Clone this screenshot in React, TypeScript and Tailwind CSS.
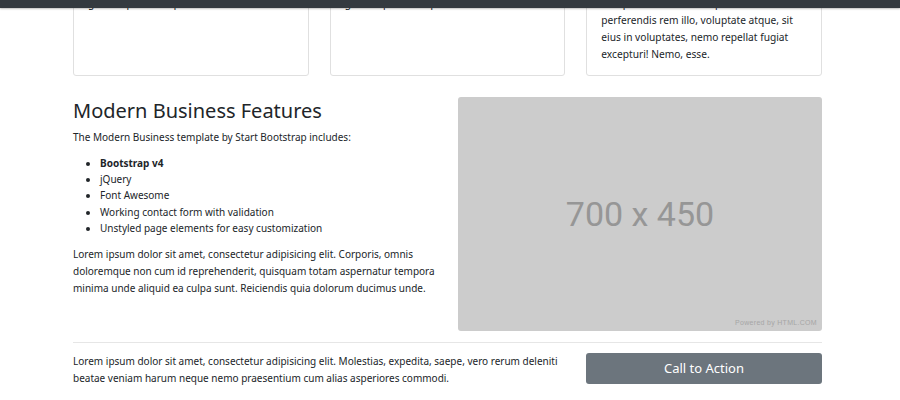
const body = "font-['Noto_Sans','Open_Sans',sans-serif]"

const cards = [
  ['Lorem ipsum dolor sit amet, consectetur', 'adipisicing elit. Sapiente esse neque sed', 'gravida pellentesque urna varius vitae.'],
  ['Lorem ipsum dolor sit amet, consectetur', 'adipisicing elit. Sapiente esse neque sed', 'gravida pellentesque urna varius vitae.'],
  [
    'Lorem ipsum dolor sit amet, consectetur',
    'adipisicing elit. Ipsam, illum! Fugit',
    'excepturi ducimus nihil provident,',
    'perferendis rem illo, voluptate atque, sit',
    'eius in voluptates, nemo repellat fugiat',
    'excepturi! Nemo, esse.',
  ],
]

const features = ['jQuery', 'Font Awesome', 'Working contact form with validation', 'Unstyled page elements for easy customization']

const loremLines = [
  'Lorem ipsum dolor sit amet, consectetur adipisicing elit. Corporis, omnis',
  'doloremque non cum id reprehenderit, quisquam totam aspernatur tempora',
  'minima unde aliquid ea culpa sunt. Reiciendis quia dolorum ducimus unde.',
]

export default function App() {
  return (
    <div className={`relative h-[400px] w-[900px] overflow-hidden bg-white text-[#212529] ${body}`}>
      {/* fixed navbar, only its bottom edge is visible */}
      <div className="absolute left-0 right-0 top-0 z-10 h-[8px] bg-[#343a40] shadow-[0_1px_2px_rgba(0,0,0,0.25)]" />

      <div className="ml-[73px] w-[749px]">
        {/* cards row, scrolled mostly out of view */}
        <div className="-mt-[54px] grid grid-cols-3 gap-[21px]">
          {cards.map((lines, i) => (
            <div key={i} className="rounded-[3px] border border-[#e0e0e0] px-[14px] pb-[12px] pt-[14px]">
              <p className="text-[10.2px] leading-[17px]">
                {lines.map((l) => (
                  <span key={l} className="block whitespace-nowrap">{l}</span>
                ))}
              </p>
            </div>
          ))}
        </div>

        {/* features */}
        <div className="mt-[21px] flex gap-[20px]">
          <div className="w-[365px]">
            <h2 className="mb-[5px] text-[20px] font-normal leading-[27px]">Modern Business Features</h2>
            <p className="mb-[9px] text-[10px] leading-[17px]">The Modern Business template by Start Bootstrap includes:</p>
            <ul className="mb-[10px] list-disc pl-[27px] text-[10px] leading-[16.2px]">
              <li>
                <strong>Bootstrap v4</strong>
              </li>
              {features.map((f) => (
                <li key={f}>{f}</li>
              ))}
            </ul>
            <p className="text-[10px] leading-[17px]">
              {loremLines.map((l) => (
                <span key={l} className="block whitespace-nowrap">{l}</span>
              ))}
            </p>
          </div>
          <div className="relative flex h-[234px] w-[364px] items-center justify-center rounded-[3px] bg-[#cccccc]">
            <span className="font-['Roboto','Liberation_Sans',sans-serif] text-[34px] text-[#969696]">700 x 450</span>
            <span className="absolute bottom-[3px] right-[5px] font-['Liberation_Sans',sans-serif] text-[7px] tracking-[0.3px] text-[#a6a6a6]">
              Powered by HTML.COM
            </span>
          </div>
        </div>

        <hr className="mb-[10px] mt-[11px] border-0 border-t border-[#e6e6e6]" />

        {/* call to action */}
        <div className="flex gap-[20px]">
          <p className="w-[493px] text-[10px] leading-[17px]">
            Lorem ipsum dolor sit amet, consectetur adipisicing elit. Molestias, expedita, saepe, vero rerum deleniti
            <br />
            beatae veniam harum neque nemo praesentium cum alias asperiores commodi.
          </p>
          <button className="h-[31px] w-[236px] rounded-[3px] bg-[#6c757d] text-[13px] text-white">Call to Action</button>
        </div>
      </div>
    </div>
  )
}
